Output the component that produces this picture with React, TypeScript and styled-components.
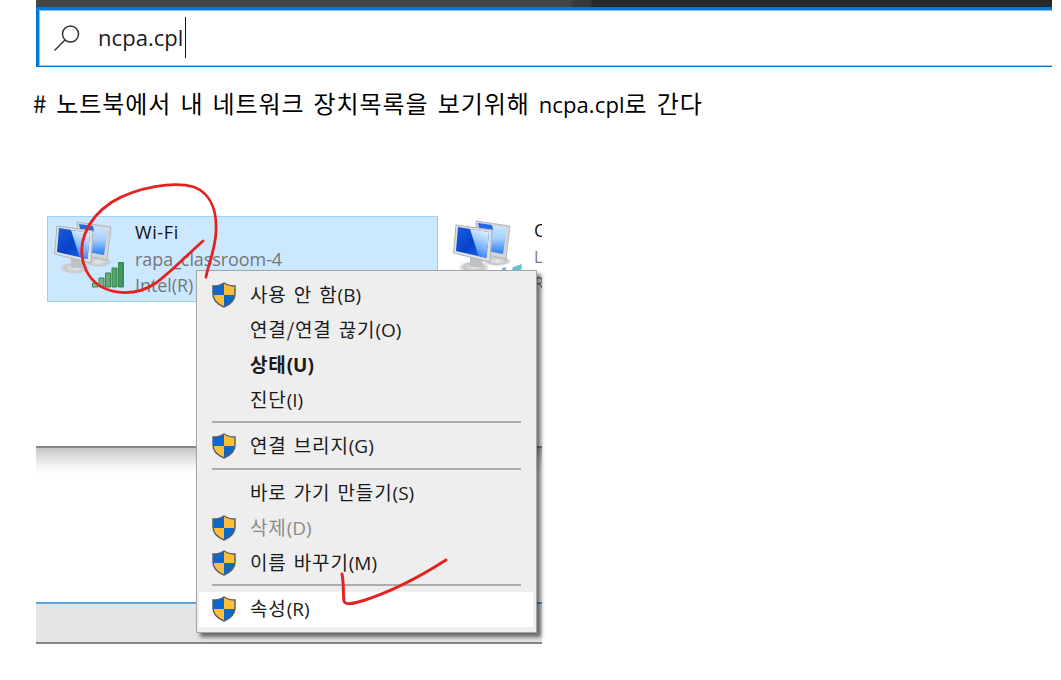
import React from "react";
import styled, { createGlobalStyle } from "styled-components";

const GlobalStyle = createGlobalStyle`
  body { margin: 0; background: #fff; }
  * { box-sizing: border-box; }
`;

const Page = styled.main`
  width: 1061px;
  height: 680px;
  overflow: hidden;
  background: #fff;
  color: #111;
  font-family: "Open Sans", "Noto Sans CJK KR", sans-serif;
`;

const SearchShot = styled.section`
  width: 1016px;
  height: 67px;
  margin-left: 36px;
  display: flex;
  flex-direction: column;
`;

const DarkStrip = styled.div`
  height: 7px;
  background: linear-gradient(90deg, #444 0, #444 535px, #3a3a3a 537px, #363636 555px, #292929 556px);
`;

const SearchBox = styled.div`
  flex: 1;
  display: flex;
  align-items: center;
  border: solid #0078d7;
  border-width: 3px 0 1px 3px;
  box-shadow: inset 1px 1px 0 #8cc0ec, inset 0 -1px 0 #9ccbf2;
  padding-left: 14px;
`;

const SearchText = styled.span`
  margin: -2px 0 0 17px;
  font-size: 22px;
  line-height: 40px;
  letter-spacing: 0.05px;
  color: #1a1a1a;
`;

const Caret = styled.span`
  width: 1px;
  height: 41px;
  margin: -1px 0 0 2px;
  background: #111;
`;

const Caption = styled.p`
  margin: 17px 0 0 33px;
  height: 38px;
  line-height: 38px;
  font-family: "Noto Sans CJK KR", sans-serif;
  font-size: 24px;
  letter-spacing: 0.94px;
  word-spacing: 2.7px;
  white-space: nowrap;
  color: #000;
`;

const Latin = styled.span<{ $size: number; $spacing?: number }>`
  font-family: "Open Sans", sans-serif;
  font-size: ${(p) => p.$size}px;
  letter-spacing: ${(p) => p.$spacing ?? 0}px;
`;

const NetworkShot = styled.section`
  position: relative;
  width: 506px;
  height: 501px;
  margin: 21px 0 0 36px;
  display: flex;
  flex-direction: column;
`;

const Explorer = styled.div`
  height: 303px;
  padding: 73px 0 0 11px;
  display: flex;
  align-items: flex-start;
  overflow: hidden;
`;

const Connection = styled.div<{ $selected?: boolean }>`
  flex: none;
  width: ${(p) => (p.$selected ? 391 : 120)}px;
  height: 86px;
  display: flex;
  border: 1px solid ${(p) => (p.$selected ? "#99d1ff" : "transparent")};
  background: ${(p) => (p.$selected ? "#cce8ff" : "transparent")};
  padding: ${(p) => (p.$selected ? "3px 0 0 5px" : "2px 0 0 13px")};
`;

const Lines = styled.div<{ $small?: boolean }>`
  margin: ${(p) => (p.$small ? "-2px 0 0 8px" : "-1px 0 0 8px")};
  font-size: ${(p) => (p.$small ? 16 : 18)}px;
  line-height: 26.5px;
  letter-spacing: -0.08px;
  white-space: nowrap;
  color: #767676;
`;

const Name = styled.div`
  font-size: 18px;
  letter-spacing: 0.6px;
  color: #111;
`;

const Shadow = styled.div`
  height: 156px;
  border-top: 2px solid #858585;
  background: linear-gradient(#c4c4c4, #e2e2e2 10px, #f7f7f7 20px, #fff 27px);
`;

const Footer = styled.div`
  height: 42px;
  border-top: 2px solid #56a5dc;
  border-bottom: 2px solid #858585;
  background: #e4e4e4;
`;

const Menu = styled.div`
  position: absolute;
  left: 160px;
  top: 127px;
  width: 341px;
  height: 363px;
  padding: 6px 3px 0 2px;
  border: 1px solid #a5a5a5;
  background: #eee;
  box-shadow: 4px 4px 4px rgba(0, 0, 0, 0.55);
`;

const Item = styled.div<{ $bold?: boolean; $disabled?: boolean; $active?: boolean }>`
  height: 35px;
  display: flex;
  align-items: center;
  padding-left: 13px;
  background: ${(p) => (p.$active ? "#fff" : "transparent")};
  color: ${(p) => (p.$disabled ? "#8b8b8b" : "#1a1a1a")};
  font-weight: ${(p) => (p.$bold ? 700 : 400)};
`;

const IconSlot = styled.span`
  width: 24px;
  height: 26px;
  margin-right: 14px;
`;

const Label = styled.span`
  margin-top: -1px;
  font-family: "Noto Sans CJK KR", sans-serif;
  font-size: 19px;
  line-height: 34px;
  letter-spacing: 0.85px;
  word-spacing: 2px;
  white-space: nowrap;
`;

const Separator = styled.div`
  height: 11.5px;
  padding: 4px 12px 0 13px;
  &::before {
    content: "";
    display: block;
    height: 2px;
    background: #adadad;
  }
`;

const Ink = styled.svg`
  position: absolute;
  inset: 0;
  overflow: visible;
  pointer-events: none;
`;

const Shield = () => (
  <svg width="24" height="26" viewBox="0 0 24 26">
    <path d="M12 1C9 3 5 4 1 4v8c0 6 4 10 11 13 7-3 11-7 11-13V4C19 4 15 3 12 1Z" fill="#0b68c8" />
    <path d="M12 1c3 2 7 3 11 3v9H12ZM1 13h11v12C5 22 1.500 18 1 13Z" fill="#ffbd38" />
    <path d="M12 1C9 3 5 4 1 4v8c0 6 4 10 11 13 7-3 11-7 11-13V4C19 4 15 3 12 1Z" fill="none" stroke="#5c6066" strokeWidth="1.5" />
  </svg>
);

const Computers = ({ wifi = false }: { wifi?: boolean }) => (
  <svg width="74" height="76" viewBox="0 0 74 76">
    <defs>
      <linearGradient id="screen" x1="0" y1="0" x2="1" y2="1">
        <stop offset="0" stopColor="#1c5cdc" />
        <stop offset=".5" stopColor="#0742c8" />
        <stop offset="1" stopColor="#1a74ff" />
      </linearGradient>
      <linearGradient id="shine" x1="0.3" y1="0" x2="0" y2="1">
        <stop offset="0" stopColor="#d5ebff" />
        <stop offset=".45" stopColor="#86b9fb" />
        <stop offset="1" stopColor="#1764f2" />
      </linearGradient>
      <linearGradient id="back" x1="0" y1="0" x2="0" y2="1">
        <stop offset="0" stopColor="#d3eaff" />
        <stop offset=".5" stopColor="#a5d0fc" />
        <stop offset="1" stopColor="#2a7cf0" />
      </linearGradient>
      <linearGradient id="bars" x1="0" y1="0" x2="1" y2="0">
        <stop offset="0" stopColor="#8bc59c" />
        <stop offset="1" stopColor="#3b935a" />
      </linearGradient>
      <radialGradient id="stand">
        <stop offset="0" stopColor="#e9e9e9" />
        <stop offset=".7" stopColor="#c6c8ca" />
        <stop offset="1" stopColor="#c6c8ca" stopOpacity=".2" />
      </radialGradient>
    </defs>
    <ellipse cx="45" cy="42" rx="14" ry="5" fill="url(#stand)" />
    <path d="m24 2 34 5-4 33-29-6Z" fill="#d3d5d6" stroke="#b4b7b9" strokeLinejoin="round" />
    <path d="m26 4 29 5-4 26-22-4Z" fill="url(#back)" />
    <path d="m26 4 14 2 1 5-14-2Z" fill="#2568e6" />
    <ellipse cx="22" cy="48" rx="15" ry="6" fill="url(#stand)" />
    <path d="m18 37 13 3-1 8H18Z" fill="#bfc2c4" />
    <path d="m4 6 36 5-2 32L1.500 34Z" fill="#dfe0e1" stroke="#aeb2b4" strokeLinejoin="round" />
    <path d="m6 8 31 5-2.500 26L4 32Z" fill="url(#screen)" />
    <path d="m18 10 19 3-2.500 26-8-2Z" fill="url(#shine)" />
    {wifi ? (
      <path
        d="M39.500 63h5v4h-5ZM46 58h5v9h-5ZM52.500 53h5v14h-5ZM59 48h5v19h-5ZM65.500 42.500h5V67h-5Z"
        fill="url(#bars)"
        stroke="#36834d"
      />
    ) : (
      <path d="m50 49 4-1v6h-4Zm11-1 9-3-1 9H59Z" fill="#69bed8" />
    )}
  </svg>
);

type Entry = { label?: string; key?: string; shield?: boolean; bold?: boolean; disabled?: boolean; active?: boolean };
const entries: Entry[] = [
  { label: "사용 안 함", key: "(B)", shield: true },
  { label: "연결/연결 끊기", key: "(O)" },
  { label: "상태", key: "(U)", bold: true },
  { label: "진단", key: "(I)" },
  {},
  { label: "연결 브리지", key: "(G)", shield: true },
  {},
  { label: "바로 가기 만들기", key: "(S)" },
  { label: "삭제", key: "(D)", shield: true, disabled: true },
  { label: "이름 바꾸기", key: "(M)", shield: true },
  {},
  { label: "속성", key: "(R)", shield: true, active: true },
];

export default function App() {
  return (
    <Page>
      <GlobalStyle />
      <SearchShot>
        <DarkStrip />
        <SearchBox>
          <svg width="28" height="28" viewBox="0 0 28 28" fill="none" stroke="#333" strokeWidth="1.5">
            <circle cx="17.500" cy="10" r="8" />
            <path d="M12 16 1.500 26.500" />
          </svg>
          <SearchText>ncpa.cpl</SearchText>
          <Caret />
        </SearchBox>
      </SearchShot>
      <Caption>
        # 노트북에서 내 네트워크 장치목록을 보기위해 <Latin $size={22} $spacing={0.1}>ncpa.cpl</Latin>로 간다
      </Caption>
      <NetworkShot>
        <Explorer>
          <Connection $selected>
            <Computers wifi />
            <Lines>
              <Name>Wi-Fi</Name>
              <div>rapa_classroom-4</div>
              <div>Intel(R)</div>
            </Lines>
          </Connection>
          <Connection>
            <Computers />
            <Lines $small>
              <Name>O</Name>
              <div>L:</div>
              <div>R</div>
            </Lines>
          </Connection>
        </Explorer>
        <Shadow />
        <Footer />
        <Menu>
          {entries.map((e, i) =>
            e.label ? (
              <Item key={i} $bold={e.bold} $disabled={e.disabled} $active={e.active}>
                <IconSlot>{e.shield && <Shield />}</IconSlot>
                <Label>
                  {e.label}
                  <Latin $size={19}>{e.key}</Latin>
                </Label>
              </Item>
            ) : (
              <Separator key={i} />
            )
          )}
        </Menu>
        <Ink width="506" height="501" viewBox="36 143 506 501" fill="none" stroke="#e32222" strokeLinecap="round">
          <path d="M203 241C186 256 171 272 156 283C132 299 98 295 86 270C75 246 86 219 112 202C137 187 174 181 194 187C212 194 217 213 216 232C215 251 208 265 206 277" strokeWidth="2.800" />
          <path d="M342 574C344 584 343 596 344 601C345 605 352 604 362 601C391 592 421 576 446 560" strokeWidth="3" />
        </Ink>
      </NetworkShot>
    </Page>
  );
}
